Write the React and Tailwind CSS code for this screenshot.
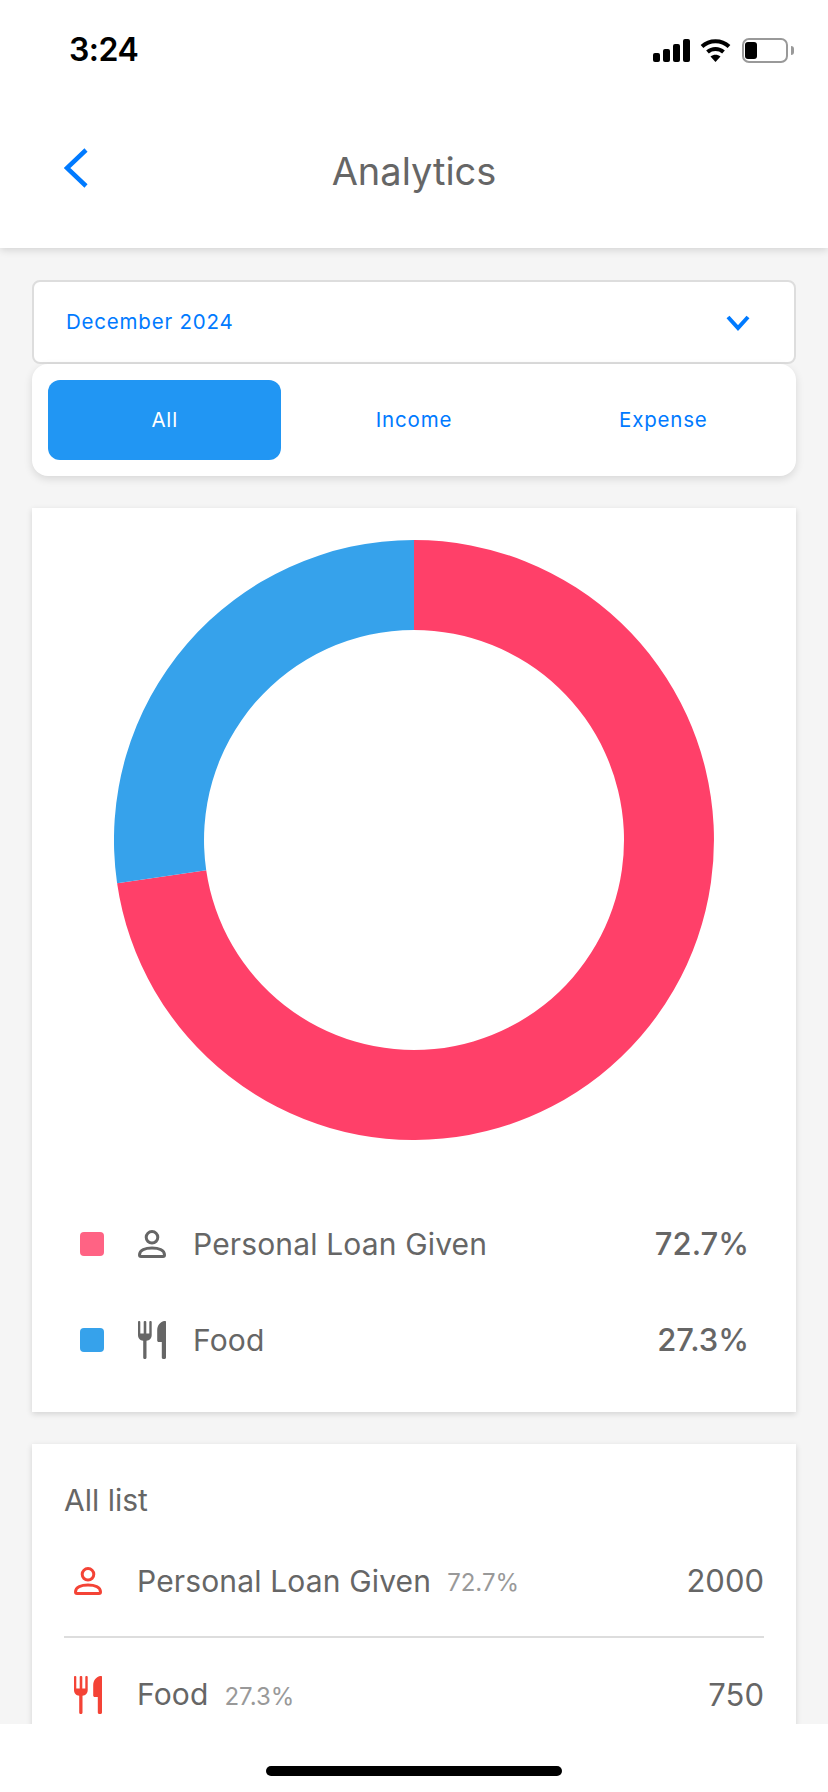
const blue = "text-[#007aff]"

function PersonIcon({ color }) {
  return (
    <svg width="28" height="28" viewBox="0 0 28 28" fill="none" stroke={color} strokeWidth="3">
      <circle cx="14" cy="7.300" r="5.800" />
      <path d="M1.500 25c0-5 6-7 12.500-7s12.500 2 12.500 7c0 1-.5 1.500-1.500 1.500H3c-1 0-1.500-.5-1.500-1.500z" />
    </svg>
  )
}

function FoodIcon({ color }) {
  return (
    <svg width="28" height="38" viewBox="0 0 28 38" fill={color}>
      <path d="M0 1c0-1.300 2.300-1.300 2.300 0v11.500h3.400V1c0-1.300 2.600-1.300 2.600 0v11.500h3V1c0-1.300 2.400-1.300 2.400 0v13c0 3.300-2.200 5.500-5.200 5.800V36.500c0 2-3.300 2-3.300 0V19.800C2.200 19.500 0 17.300 0 14z" />
      <path d="M28 1v35.500c0 2-4.200 2-4.200 0V21h-3c-1 0-1.600-.6-1.600-1.500V9.500C19.200 4.500 22 1 26 0c1.300-.3 2 0 2 1z" />
    </svg>
  )
}

function StatusIcons() {
  return (
    <div className="flex items-center">
      <svg width="37" height="23" viewBox="0 0 37 23" fill="#000">
        <rect x="0" y="14" width="7" height="9" rx="2" />
        <rect x="10" y="10" width="7" height="13" rx="2" />
        <rect x="20" y="5" width="7" height="18" rx="2" />
        <rect x="30" y="0" width="7" height="23" rx="2" />
      </svg>
      <svg className="ml-[10px]" width="31" height="24" viewBox="0 0 31 24" fill="none" stroke="#000" strokeWidth="4">
        <path d="M2 8.500C9.500 1.500 21.500 1.500 29 8.500" />
        <path d="M7.500 14c4.500-4 11.500-4 16 0" />
        <path d="M15.500 24l-5-5.500c3-2.200 7-2.200 10 0z" fill="#000" stroke="none" />
      </svg>
      <div className="ml-[11px] flex items-center">
        <div className="flex h-[25px] w-[46px] items-center rounded-[7px] border-2 border-[#999] pl-[1px]">
          <div className="h-[17px] w-[12px] rounded-[3px] bg-black" />
        </div>
        <div className="ml-[3px] h-[9px] w-[3px] rounded-r-full bg-[#999]" />
      </div>
    </div>
  )
}

function Donut() {
  return (
    <svg className="mx-auto block" width="600" height="600" viewBox="0 0 600 600">
      <path
        d="M300 0A300 300 0 1 1 3.100 343.200L92.200 330.200A210 210 0 1 0 300 90Z"
        fill="#ff4069"
      />
      <path
        d="M300 0A300 300 0 0 0 3.100 343.200L92.200 330.200A210 210 0 0 1 300 90Z"
        fill="#36a2eb"
      />
    </svg>
  )
}

function LegendRow({ color, icon, label, percent }) {
  return (
    <div className="flex h-[96px] items-center pr-[47px] pl-[48px]">
      <div className={`h-[24px] w-[24px] rounded-[4px] ${color}`} />
      <div className="ml-[34px] flex w-[28px] justify-center">{icon}</div>
      <div className="ml-[27px] text-[30px] tracking-[0.15px] text-[#666]">{label}</div>
      <div className="ml-auto text-[31px] font-medium text-[#666]">{percent}</div>
    </div>
  )
}

function ListRow({ icon, label, percent, amount }) {
  return (
    <div className="flex items-center">
      <div className="ml-[10px] flex w-[28px] justify-center">{icon}</div>
      <div className="ml-[35px] text-[30px] tracking-[0.15px] text-[#666]">{label}</div>
      <div className="mt-[4px] ml-[16px] text-[24px] text-[#999]">{percent}</div>
      <div className="ml-auto text-[31px] text-[#666]">{amount}</div>
    </div>
  )
}

export default function App() {
  return (
    <div
      className="flex h-[1792px] w-[828px] flex-col overflow-hidden bg-[#f5f5f5]"
      style={{ fontFamily: "Inter, sans-serif" }}
    >
      <div className="z-10 h-[248px] shrink-0 bg-white shadow-[0_2px_8px_rgba(0,0,0,0.14)]">
        <div className="flex h-[100px] items-center justify-between pr-[34px] pl-[69px]">
          <div className="text-[32px] font-semibold tracking-[-0.5px] text-black">3:24</div>
          <StatusIcons />
        </div>
        <div className="relative flex h-[144px] items-center justify-center pb-[2px]">
          <svg className="absolute top-[48px] left-[64px]" width="24" height="40" viewBox="0 0 24 40" fill="none" stroke="#007aff" strokeWidth="4.500">
            <path d="M22 2L3 20l19 18" />
          </svg>
          <div className="text-[38px] font-normal text-[#666]">Analytics</div>
        </div>
      </div>

      <div className="flex-1 overflow-hidden px-[32px] pt-[32px]">
        <div className="flex h-[84px] items-center justify-between rounded-lg border-2 border-[#ddd] bg-white pt-[1px] pr-[44px] pl-[32px]">
          <div className={`text-[20.5px] tracking-[0.8px] ${blue}`}>December 2024</div>
          <svg width="24" height="16" viewBox="0 0 24 16" fill="none" stroke="#007aff" strokeWidth="4">
            <path d="M2 2l10 11L22 2" />
          </svg>
        </div>

        <div className="flex h-[112px] gap-[16px] rounded-[16px] bg-white p-[16px] shadow-[0_3px_8px_rgba(0,0,0,0.12)]">
          <div className="flex flex-1 items-center justify-center rounded-[12px] bg-[#2196f3] text-[20.5px] tracking-[0.8px] text-white">All</div>
          <div className={`flex flex-1 items-center justify-center text-[20.5px] tracking-[0.8px] ${blue}`}>Income</div>
          <div className={`flex flex-1 items-center justify-center text-[20.5px] tracking-[0.8px] ${blue}`}>Expense</div>
        </div>

        <div className="mt-[32px] h-[904px] bg-white pt-[32px] shadow-[0_2px_6px_rgba(0,0,0,0.14)]">
          <Donut />
          <div className="mt-[56px]">
            <LegendRow color="bg-[#ff6384]" icon={<PersonIcon color="#666" />} label="Personal Loan Given" percent="72.7%" />
            <LegendRow color="bg-[#36a2eb]" icon={<FoodIcon color="#666" />} label="Food" percent="27.3%" />
          </div>
        </div>

        <div className="mt-[32px] h-[400px] bg-white px-[32px] pt-[38px] shadow-[0_2px_6px_rgba(0,0,0,0.14)]">
          <div className="text-[30px] leading-[36px] text-[#666]">All list</div>
          <div className="mt-[40px]">
            <ListRow icon={<PersonIcon color="#f44336" />} label="Personal Loan Given" percent="72.7%" amount="2000" />
          </div>
          <div className="mt-[31px] h-[2px] bg-[#ddd]" />
          <div className="mt-[34px]">
            <ListRow icon={<FoodIcon color="#f44336" />} label="Food" percent="27.3%" amount="750" />
          </div>
        </div>
      </div>

      <div className="flex h-[68px] shrink-0 justify-center bg-white pt-[42px]">
        <div className="h-[10px] w-[296px] rounded-full bg-black" />
      </div>
    </div>
  )
}
